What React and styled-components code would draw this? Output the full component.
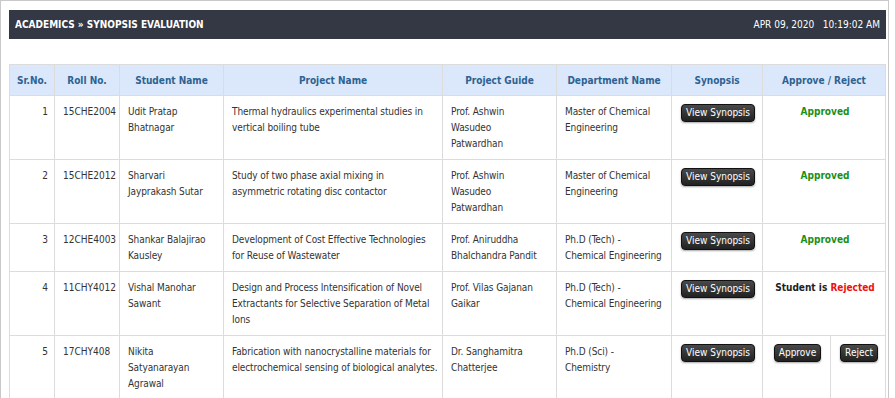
import styled, { createGlobalStyle } from "styled-components";

const GlobalStyle = createGlobalStyle`
  html, body {
    margin: 0;
    padding: 0;
    background: #fff;
  }
  body {
    font-family: "DejaVu Sans Condensed", "DejaVu Sans", sans-serif;
    font-size: 10px;
    color: #333;
  }
`

// each text cell keeps its own line breaks, as the source page wraps them
const rows = [
  {
    sr: 1,
    roll: "15CHE2004",
    name: ["Udit Pratap", "Bhatnagar"],
    project: ["Thermal hydraulics experimental studies in", "vertical boiling tube"],
    guide: ["Prof. Ashwin", "Wasudeo", "Patwardhan"],
    dept: ["Master of Chemical", "Engineering"],
    status: "approved",
  },
  {
    sr: 2,
    roll: "15CHE2012",
    name: ["Sharvari", "Jayprakash Sutar"],
    project: ["Study of two phase axial mixing in", "asymmetric rotating disc contactor"],
    guide: ["Prof. Ashwin", "Wasudeo", "Patwardhan"],
    dept: ["Master of Chemical", "Engineering"],
    status: "approved",
  },
  {
    sr: 3,
    roll: "12CHE4003",
    name: ["Shankar Balajirao", "Kausley"],
    project: ["Development of Cost Effective Technologies", "for Reuse of Wastewater"],
    guide: ["Prof. Aniruddha", "Bhalchandra Pandit"],
    dept: ["Ph.D (Tech) -", "Chemical Engineering"],
    status: "approved",
  },
  {
    sr: 4,
    roll: "11CHY4012",
    name: ["Vishal Manohar", "Sawant"],
    project: [
      "Design and Process Intensification of Novel",
      "Extractants for Selective Separation of Metal",
      "Ions",
    ],
    guide: ["Prof. Vilas Gajanan", "Gaikar"],
    dept: ["Ph.D (Tech) -", "Chemical Engineering"],
    status: "rejected",
  },
  {
    sr: 5,
    roll: "17CHY408",
    name: ["Nikita", "Satyanarayan", "Agrawal"],
    project: [
      "Fabrication with nanocrystalline materials for",
      "electrochemical sensing of biological analytes.",
    ],
    guide: ["Dr. Sanghamitra", "Chatterjee"],
    dept: ["Ph.D (Sci) -", "Chemistry"],
    status: "pending",
  },
]

const Lines = ({ items }) => items.map((l, i) => <Line key={i}>{l}</Line>)

const App = () => {
  return (
    <>
      <GlobalStyle />
      <Page>
        <TitleBar>
          <Title>ACADEMICS » SYNOPSIS EVALUATION</Title>
          <Stamp>APR 09, 2020&nbsp;&nbsp;&nbsp;10:19:02 AM</Stamp>
        </TitleBar>
        <Grid>
          <colgroup>
            <col style={{ width: 45 }} />
            <col style={{ width: 65 }} />
            <col style={{ width: 104 }} />
            <col style={{ width: 219 }} />
            <col style={{ width: 114 }} />
            <col style={{ width: 115 }} />
            <col style={{ width: 91 }} />
            <col style={{ width: 68 }} />
            <col style={{ width: 55 }} />
          </colgroup>
          <thead>
            <tr>
              <Th>Sr.No.</Th>
              <Th>Roll No.</Th>
              <Th>Student Name</Th>
              <Th>Project Name</Th>
              <Th>Project Guide</Th>
              <Th>Department Name</Th>
              <Th>Synopsis</Th>
              <Th colSpan={2}>Approve / Reject</Th>
            </tr>
          </thead>
          <tbody>
            {rows.map((r) => (
              <tr key={r.sr}>
                <Td align="right">{r.sr}</Td>
                <Td>{r.roll}</Td>
                <Td><Lines items={r.name} /></Td>
                <Td><Lines items={r.project} /></Td>
                <Td><Lines items={r.guide} /></Td>
                <Td><Lines items={r.dept} /></Td>
                <Td align="center">
                  <DarkButton>View Synopsis</DarkButton>
                </Td>
                {r.status === "pending" ? (
                  <>
                    <Td align="center">
                      <DarkButton>Approve</DarkButton>
                    </Td>
                    <Td align="center">
                      <DarkButton>Reject</DarkButton>
                    </Td>
                  </>
                ) : (
                  <Td align="center" colSpan={2}>
                    {r.status === "approved" ? (
                      <Approved>Approved</Approved>
                    ) : (
                      <Verdict>
                        Student is <Rejected>Rejected</Rejected>
                      </Verdict>
                    )}
                  </Td>
                )}
              </tr>
            ))}
          </tbody>
        </Grid>
      </Page>
    </>
  );
}

export default App;

const Page = styled.div`
  box-sizing: border-box;
  width: 889px;
  height: 398px;
  overflow: hidden;
  border: 1px solid #c9c9c9;
  border-bottom: none;
  padding: 9px 2px 0 8px;
`

const TitleBar = styled.div`
  height: 29px;
  background: #333844;
  color: #fff;
  display: flex;
  align-items: center;
  justify-content: space-between;
  padding: 0 6px 0 6px;
`

const Title = styled.div`
  font-weight: bold;
  font-size: 10px;
`

const Stamp = styled.div`
  font-size: 10px;
`

const Grid = styled.table`
  margin-top: 25px;
  width: 877px;
  table-layout: fixed;
  border-collapse: collapse;
  border: 1px solid #dcdcdc;
`

const Th = styled.th`
  height: 30px;
  padding: 0 4px;
  background: #dbe8fb;
  color: #2d6291;
  font-weight: bold;
  font-size: 10px;
  text-align: center;
  white-space: nowrap;
  border: 1px solid #dcdcdc;
`

const Td = styled.td`
  vertical-align: top;
  padding: 8px 6px 7px 8px;
  line-height: 16px;
  text-align: ${(p) => p.align || "left"};
  border: 1px solid #dcdcdc;
  color: #333;
`

const Line = styled.div`
  white-space: nowrap;
  letter-spacing: -0.1px;
`

const DarkButton = styled.button`
  font-family: inherit;
  font-size: 10px;
  color: #fff;
  height: 18px;
  padding: 0 4px;
  margin: 0;
  white-space: nowrap;
  border: 1px solid #111;
  border-radius: 4px;
  background: linear-gradient(#4a4a4a, #222);
  box-shadow: 0 1px 2px rgba(0, 0, 0, 0.35);
  cursor: pointer;
  line-height: 16px;
  vertical-align: top;
`

const Approved = styled.span`
  color: #1b8f1b;
  font-weight: bold;
`

const Verdict = styled.span`
  color: #222;
  font-weight: bold;
`

const Rejected = styled.span`
  color: #ee1111;
`
